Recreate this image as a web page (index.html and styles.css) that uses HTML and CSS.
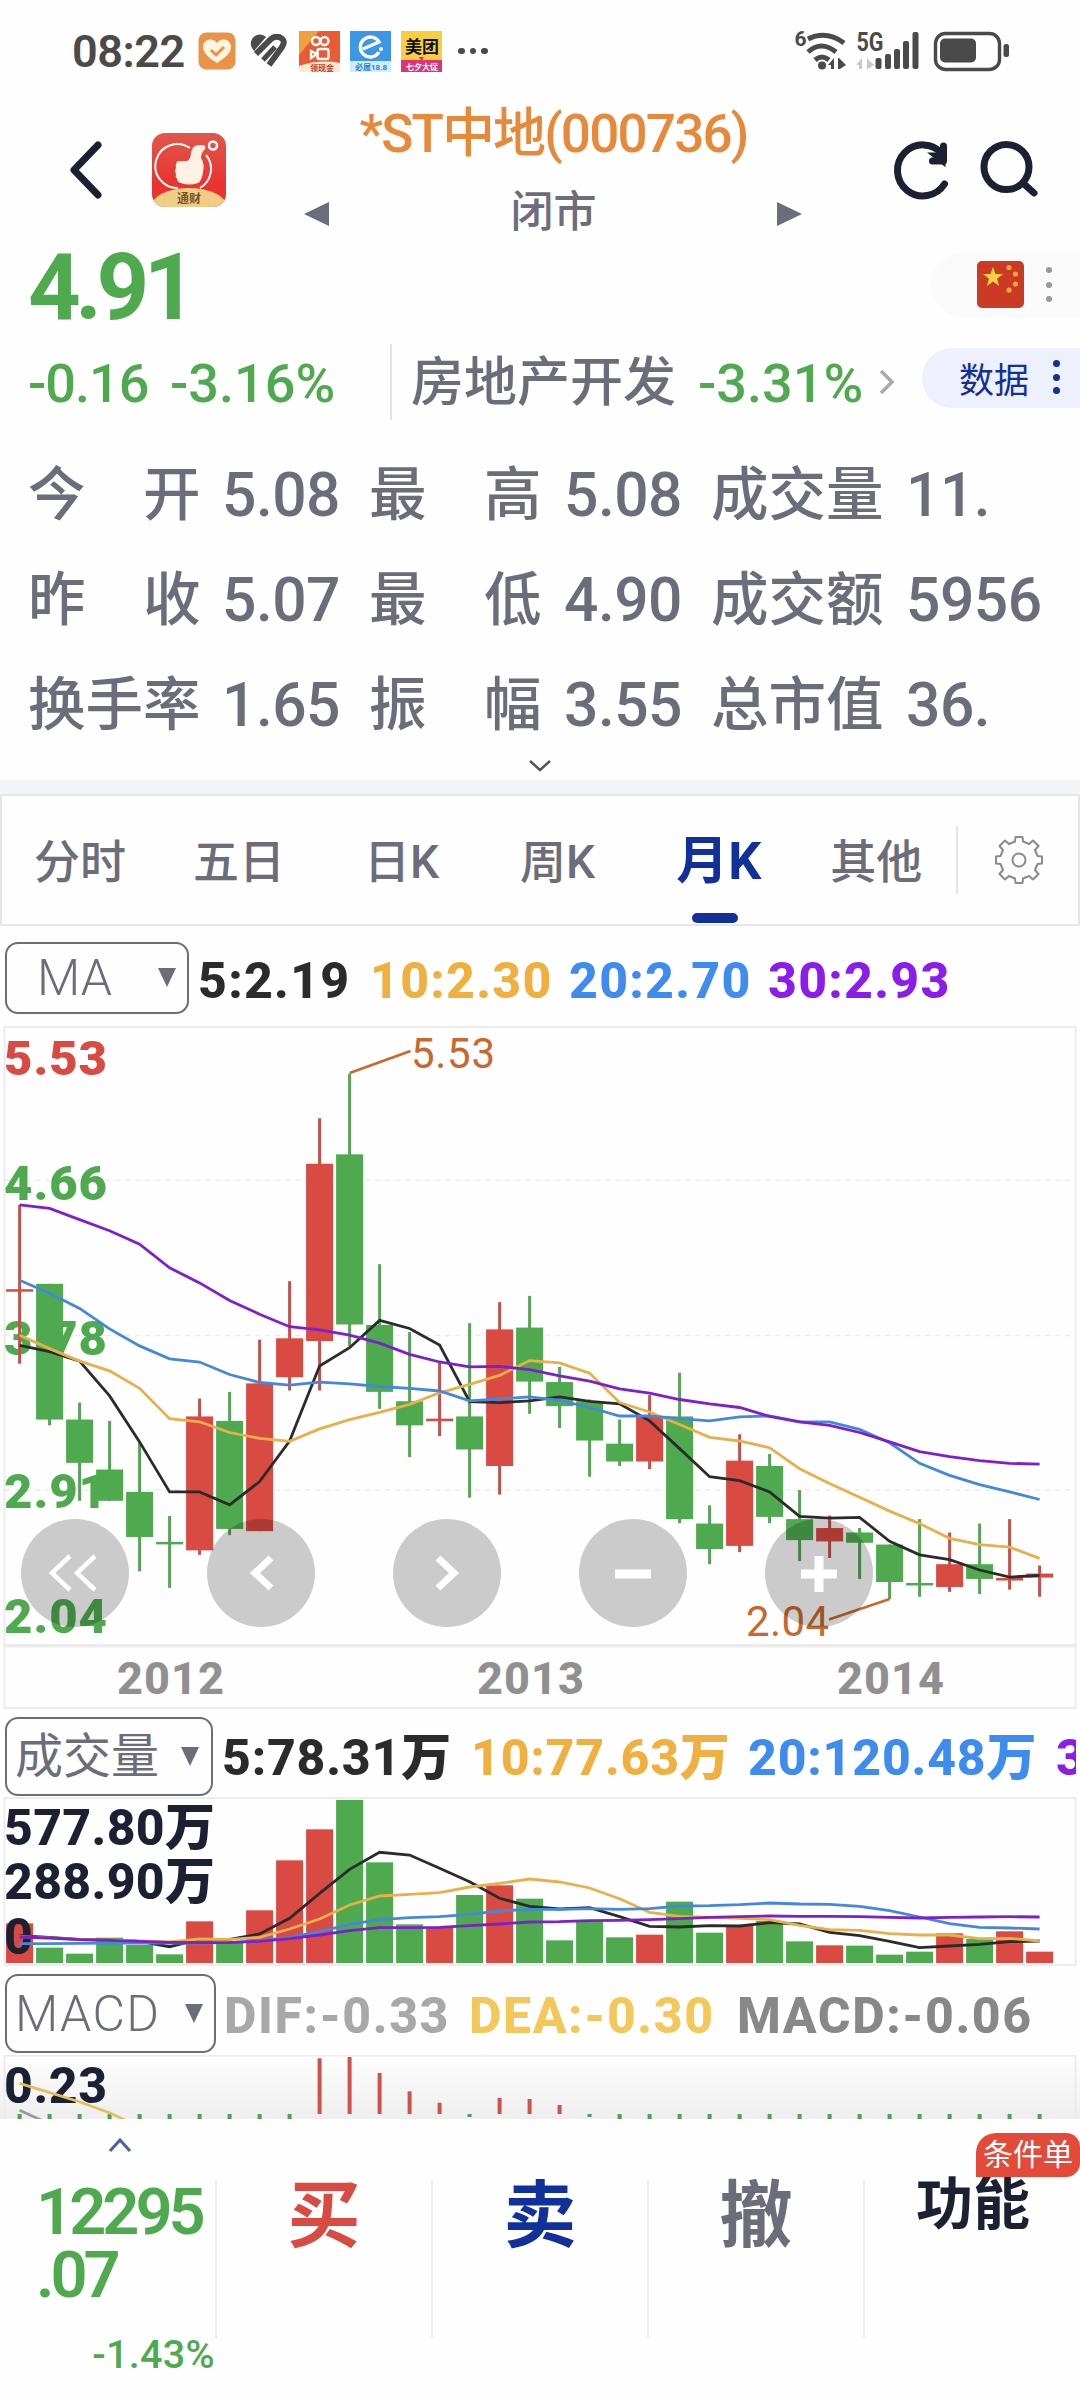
FILE: index.html
```html
<!DOCTYPE html>
<html lang="zh-CN">
<head>
<meta charset="utf-8">
<title>*ST中地(000736)</title>
<link rel="stylesheet" href="styles.css">
</head>

<body>
<div class="status">
	<span class="time">08:22</span>
	<svg class="ico-heart" width="38" height="38" viewBox="0 0 38 38">
		<rect x="0.5" y="0.5" width="37" height="37" rx="8" fill="#ea9348"/>
		<path d="M19 31C11 26 5 21 5 15c0-8 10-10 14-4 4-6 14-4 14 4 0 6-6 11-14 16z" fill="#fff3e2"/>
		<path d="M13 18l5 5 8-8" fill="none" stroke="#ea9348" stroke-width="3"/>
	</svg>
	<svg class="ico-keep" width="38" height="34" viewBox="0 0 38 34" fill="none" stroke="#4a4a4a">
		<path d="M2 14a9 9 0 0 1 14-11L4 17z" fill="#4a4a4a" stroke="none"/>
		<path d="M6 20L21 5q5-4 10-1t1 9L19 31" stroke-width="6"/>
		<path d="M13 26l12-13" stroke-width="5"/>
	</svg>
	<svg class="ico-app" width="41" height="41" viewBox="0 0 41 41">
		<rect width="41" height="41" fill="#ea5a35"/>
		<path d="M0 0h20L0 24z" fill="#f0a03c"/>
		<g fill="none" stroke="#fff" stroke-width="2.4">
			<circle cx="17" cy="10" r="4"/><circle cx="25.5" cy="10" r="4"/>
			<rect x="18.5" y="18" width="11" height="10" rx="2"/><path d="M12 20l6 3-6 4z"/>
		</g>
		<path d="M0 35q20-7 41-3v9H0z" fill="#fdebd0"/>
		<text x="11" y="40" font-size="8" font-weight="700" fill="#c53a24">领现金</text>
	</svg>
	<svg class="ico-app" width="41" height="41" viewBox="0 0 41 41">
		<rect width="41" height="41" fill="#3d97e6"/>
		<path d="M13 18l16-7A10 10 0 1 0 29 21" fill="none" stroke="#fff" stroke-width="3.4"/>
		<circle cx="31" cy="18" r="2" fill="#fff"/>
		<rect y="30" width="41" height="11" fill="#d2ebfb"/>
		<text x="5" y="39" font-size="8" font-weight="700" fill="#2f80cf">必属18.8</text>
	</svg>
	<svg class="ico-app" width="41" height="41" viewBox="0 0 41 41">
		<rect width="41" height="41" fill="#f6cf3f"/>
		<rect y="29" width="41" height="12" fill="#dd3377"/>
		<path d="M18 26h5l-2.5 4z" fill="#d33"/>
		<text x="4" y="22" font-size="17" font-weight="700" fill="#111">美团</text>
		<text x="5" y="39" font-size="8" font-weight="700" fill="#fff">七夕大促</text>
	</svg>
	<span class="more"><i></i><i></i><i></i></span>
	<svg class="signal" width="220" height="46" viewBox="790 28 220 46">
		<g fill="none" stroke="#4a4a4a">
			<path d="M808 39q18-9 36 4M808 52q13-12 28 0M815 60q7-6 14 0" stroke-width="5"/>
			<rect x="935.5" y="33.5" width="64" height="36" rx="10" stroke-width="3.4"/>
		</g>
		<g fill="#4a4a4a">
			<circle cx="822" cy="65.5" r="4"/>
			<path d="M828 65l6-7v11h-3v-4zM839 58l7 7-6 4h-2V58z"/>
			<rect x="875.5" y="58" width="6" height="11" rx="2"/>
			<rect x="885" y="54" width="6" height="15" rx="2"/>
			<rect x="894" y="49" width="6" height="20" rx="2"/>
			<rect x="903" y="41" width="6" height="28" rx="2"/>
			<rect x="912.5" y="32" width="6" height="37" rx="2"/>
			<rect x="940" y="38.5" width="36" height="24" rx="5"/>
			<rect x="1003.5" y="44" width="5.5" height="13" rx="2.5"/>
			<text x="794.5" y="46" font-size="21" font-weight="700">6</text>
			<text x="856.5" y="50.5" font-size="25" font-weight="700" textLength="27" lengthAdjust="spacingAndGlyphs">5G</text>
		</g>
		<path d="M856 65l6-7v11h-3v-4zM867 58l7 7-6 4h-1z" fill="#c9c9c9"/>
	</svg>
</div>

<div class="header">
	<svg class="back" width="40" height="64" viewBox="0 0 40 64"><path d="M32 8L8 33l24 25" fill="none" stroke="#1c2033" stroke-width="7" stroke-linecap="round" stroke-linejoin="round"/></svg>
	<svg class="logo" width="74" height="74" viewBox="0 0 74 74">
		<defs>
			<linearGradient id="red" x1="0" y1="0" x2="0" y2="1"><stop offset="0" stop-color="#e0574c"/><stop offset="0.7" stop-color="#ea322f"/></linearGradient>
			<clipPath id="round"><rect width="74" height="74" rx="13"/></clipPath>
		</defs>
		<g clip-path="url(#round)">
			<rect width="74" height="74" fill="url(#red)"/>
			<path d="M38 15a22 22 0 1 0-12 40M54 22a22 22 0 0 1-6 33" fill="none" stroke="#fff" stroke-width="2"/>
			<path d="M26 28h9q4-2 4-9 2-8 10-7 6 0 4 4-4 4-4 9 4 6 2 14-1 9-5 11-9 3-17 0-4-1-4-4-2-2-1-5-2-3 0-6-1-5 2-7z" fill="#fff1e4"/>
			<circle cx="61" cy="12.5" r="4" fill="none" stroke="#fff" stroke-width="2.5"/>
			<ellipse cx="37" cy="74" rx="38" ry="19" fill="#efcd87"/>
			<text x="25" y="70" font-size="12" font-weight="700" fill="#7b5122">通财</text>
		</g>
	</svg>
	<svg class="tri" width="26" height="24" viewBox="0 0 26 24"><path d="M0 12L25 0v24z" fill="#6b6d7a"/></svg>
	<div class="name">
		<h1>*ST中地(000736)</h1>
		<p>闭市</p>
	</div>
	<svg class="tri" width="26" height="24" viewBox="0 0 26 24"><path d="M0 0l25 12L0 24z" fill="#6b6d7a"/></svg>
	<svg class="tools" width="160" height="70" viewBox="885 135 160 70" fill="none" stroke="#1c2033" stroke-width="7" stroke-linecap="round">
		<path d="M944.5 185a25.5 25.5 0 1 1-2-30"/>
		<path d="M943.5 147v15h-11" stroke-linejoin="round"/><path d="M937 157h5v4z"/>
		<circle cx="1006.5" cy="168" r="22.5"/>
		<path d="M1024 185l10 9"/>
	</svg>
</div>

<div class="quote">
	<div class="price-row">
		<strong>4.91</strong>
		<div class="flag-pill">
			<svg width="47" height="47" viewBox="0 0 47 47">
				<rect width="47" height="47" rx="5" fill="#cb3a24"/>
				<path d="M16 6l2.5 7 7.5.1-6 4.6 2.2 7.3-6.2-4.4-6.2 4.4 2.2-7.3-6-4.6 7.5-.1z" fill="#fbd13c"/>
				<g fill="#f5a93a"><circle cx="32" cy="6.5" r="2.6"/><circle cx="38.5" cy="13" r="2.6"/><circle cx="38.5" cy="23" r="2.6"/><circle cx="32" cy="29" r="2.6"/></g>
			</svg>
			<span class="vdots grey"><i></i><i></i><i></i></span>
		</div>
	</div>
	<div class="change-row">
		<span class="diff">-0.16</span>
		<span class="rate">-3.16%</span>
		<span class="sector">房地产开发</span>
		<span class="sector-rate">-3.31%</span>
		<svg width="18" height="26" viewBox="0 0 18 26"><path d="M3 2l11 11L3 24" fill="none" stroke="#aaa" stroke-width="3.5"/></svg>
		<div class="data-pill">数据<span class="vdots"><i></i><i></i><i></i></span></div>
	</div>
</div>

<div class="stats">
	<span>今　开</span><b>5.08</b><span>最　高</span><b>5.08</b><span>成交量</span><b>11.</b>
	<span>昨　收</span><b>5.07</b><span>最　低</span><b>4.90</b><span>成交额</span><b>5956</b>
	<span>换手率</span><b>1.65</b><span>振　幅</span><b>3.55</b><span>总市值</span><b>36.</b>
</div>
<div class="expand"><svg width="24" height="14" viewBox="0 0 24 14"><path d="M2 2l10 9L22 2" fill="none" stroke="#555" stroke-width="2.5"/></svg></div>

<div class="tabs">
	<span>分时</span>
	<span>五日</span>
	<span>日K</span>
	<span>周K</span>
	<span class="on">月K</span>
	<span>其他</span>
	<div class="gear">
		<svg width="50" height="50" viewBox="-25 -25 50 50" fill="none" stroke="#8a8a8a" stroke-width="2">
			<path d="M-4-18.5L-3.5-23h7L4-18.5 10-16l4-3.5 5.5 5.5L16-10l2.500 6 4.500.5v7L18.500 4 16 10l3.500 4-5.500 5.500L10 16l-6 2.500-.5 4.500h-7L-4 18.500-10 16l-4 3.500-5.500-5.500L-16 10l-2.500-6-4.500-.5v-7l4.500-.5L-16-10l-3.500-4 5.500-5.500 4 3.500z" stroke-linejoin="round"/>
			<circle r="6.5"/>
		</svg>
	</div>
</div>

<div class="legend ma">
	<div class="select">MA<i></i></div>
	<span class="c5">5:2.19</span>
	<span class="c10">10:2.30</span>
	<span class="c20">20:2.70</span>
	<span class="c30">30:2.93</span>
</div>

<div class="kline">
	<svg id="kline" width="1080" height="683" viewBox="0 1026 1080 683"></svg>
	<div class="controls">
		<button><svg viewBox="0 0 108 108"><path d="M49 37L31 54l18 17M74 37L56 54l18 17" stroke-width="4.5"/></svg></button>
		<button><svg viewBox="0 0 108 108"><path d="M64 39L48 54l16 15" stroke-width="7"/></svg></button>
		<button><svg viewBox="0 0 108 108"><path d="M45 39l16 15-16 15" stroke-width="7"/></svg></button>
		<button><svg viewBox="0 0 108 108"><path d="M36 55h36" stroke-width="9"/></svg></button>
		<button><svg viewBox="0 0 108 108"><path d="M36 55h36M54 37v36" stroke-width="9"/></svg></button>
	</div>
</div>

<div class="legend vol">
	<div class="select">成交量<i></i></div>
	<span class="c5">5:78.31万</span>
	<span class="c10">10:77.63万</span>
	<span class="c20">20:120.48万</span>
	<span class="c30">3</span>
</div>
<svg id="volume" width="1080" height="169" viewBox="0 1797 1080 169"></svg>

<div class="legend macd">
	<div class="select">MACD<i></i></div>
	<span class="dif">DIF:-0.33</span>
	<span class="dea">DEA:-0.30</span>
	<span class="mac">MACD:-0.06</span>
</div>
<svg id="macd" width="1080" height="64" viewBox="0 2055 1080 64"></svg>

<div class="footer">
	<div class="index">
		<svg width="24" height="16" viewBox="0 0 24 16"><path d="M2 14L12 3l10 11" fill="none" stroke="#4a6494" stroke-width="3"/></svg>
		<strong>12295<br>.07</strong>
		<em>-1.43%</em>
	</div>
	<div class="buy">买</div>
	<div class="sell">卖</div>
	<div class="cancel">撤</div>
	<div class="func">功能<span class="badge">条件单</span></div>
</div>
<script src="chart.js"></script>
</body>
</html>
```
FILE: styles.css
```css
*{
	margin: 0;
	padding: 0;
	box-sizing: border-box;
}

body{
	width: 1080px;
	height: 2400px;
	overflow: hidden;
	background-color: #fefefe;
	font-family: Roboto, "Noto Sans CJK SC", sans-serif;
	color: #6b6d7a;
}
svg{
	display: block;
	flex: none;
}
svg text{
	font-family: Roboto, "Noto Sans CJK SC", sans-serif;
}

/* 状态栏 */
.status{
	display: flex;
	align-items: center;
	height: 102px;
	padding-left: 72px;
}
.time{
	width: 126px;
	font-size: 45px;
	font-weight: 600;
	letter-spacing: -0.5px;
	color: #4a4a4a;
	white-space: nowrap;
}
.ico-keep{
	margin: 0 11px 0 14px;
}
.ico-app{
	margin-right: 10px;
}
.more{
	display: flex;
	gap: 5px;
	margin-left: 6px;
}
.more i{
	width: 6.5px;
	height: 6.5px;
	border-radius: 50%;
	background-color: #4a4a4a;
}
.signal{
	margin-left: auto;
	margin-right: 70px;
}

/* 标题 */
.header{
	display: flex;
	height: 138px;
}
.back{
	margin: 35px 0 0 66px;
}
.logo{
	margin: 31px 78px 0 46px;
}
.tri{
	margin-top: 100px;
}
.name{
	width: 447px;
	text-align: center;
	white-space: nowrap;
}
.name h1{
	line-height: 64px;
	font-size: 53px;
	font-weight: 500;
	letter-spacing: -1.8px;
	color: #e6893a;
}
.name p{
	margin-top: 16px;
	line-height: 60px;
	font-size: 43px;
	font-weight: 500;
}
.tools{
	margin: 32px 0 0 82px;
}

/* 报价 */
.quote{
	height: 202px;
	color: #4faa4f;
	white-space: nowrap;
}
.price-row{
	display: flex;
	align-items: center;
	justify-content: space-between;
	height: 94px;
	padding-left: 28px;
}
.price-row strong{
	font-size: 92px;
	font-weight: 700;
	letter-spacing: -5.5px;
}
.flag-pill{
	display: flex;
	align-items: center;
	width: 149px;
	height: 65px;
	margin-top: -5px;
	padding-left: 46px;
	border-radius: 33px 0 0 33px;
	background-color: #fafafa;
}
.vdots{
	display: flex;
	flex-direction: column;
	gap: 6.5px;
	margin-left: 24px;
}
.vdots i{
	width: 7px;
	height: 7px;
	border-radius: 50%;
	background-color: #12309a;
}
.grey{
	margin-left: 22px;
	gap: 8.5px;
}
.grey i{
	width: 6px;
	height: 6px;
	background-color: #999;
}
.change-row{
	display: flex;
	align-items: center;
	height: 96px;
	padding-left: 28px;
	font-size: 54px;
}
.diff,
.rate,
.sector-rate{
	padding-top: 2px;
	font-weight: 500;
}
.diff{
	width: 142px;
	letter-spacing: -1px;
}
.rate{
	width: 220px;
}
.sector{
	width: 308px;
	height: 76px;
	line-height: 78px;
	padding-left: 19px;
	border-left: 2px solid #e4e4e4;
	font-size: 53px;
	font-weight: 500;
	color: #6b6d7a;
}
.sector-rate{
	width: 180px;
}
.data-pill{
	display: flex;
	align-items: center;
	width: 158px;
	height: 60px;
	margin: -8px 0 0 26px;
	padding: 0 0 2px 37px;
	border-radius: 30px 0 0 30px;
	background-color: #eef0fd;
	font-size: 35px;
	color: #12309a;
}

/* 行情数据 */
.stats{
	display: grid;
	grid-template-columns: 194px 147px 195px 147px 195px 1fr;
	grid-auto-rows: 105px;
	padding-left: 28px;
	line-height: 107px;
	font-size: 57.5px;
	font-weight: 500;
	white-space: nowrap;
}
.stats b{
	font-size: 60.5px;
	font-weight: 500;
	letter-spacing: -0.5px;
}
.expand{
	display: flex;
	justify-content: center;
	height: 37px;
	padding-top: 2px;
	border-bottom: 14px solid #f3f4f8;
}

/* 周期切换 */
.tabs{
	display: flex;
	align-items: center;
	height: 132px;
	padding-left: 32px;
	border: 2px solid #e6e6e6;
	font-size: 46px;
	font-weight: 500;
	white-space: nowrap;
}
.tabs span{
	height: 128px;
	line-height: 132px;
	margin-right: 67px;
}
.tabs span:nth-child(2){
	margin-right: 79px;
}
.tabs span:nth-child(3),
.tabs span:nth-child(4){
	margin-right: 81px;
}
.tabs .on{
	position: relative;
	margin-right: 69px;
	font-size: 52px;
	font-weight: 700;
	color: #12309a;
}
.tabs .on:after{
	content: "";
	position: absolute;
	left: 16px;
	bottom: 1px;
	width: 46px;
	height: 10px;
	border-radius: 5px;
	background-color: #12309a;
}
.tabs span:nth-child(6){
	margin-right: 34px;
}
.gear{
	display: flex;
	align-items: center;
	height: 68px;
	padding-left: 36px;
	border-left: 2px solid #e4e4e4;
}

/* 指标 */
.legend{
	display: flex;
	align-items: center;
	width: 1076px;
	padding-left: 5px;
	overflow: hidden;
	font-size: 50px;
	font-weight: 800;
	letter-spacing: 1.3px;
	white-space: nowrap;
}
.legend span{
	flex: none;
	line-height: 60px;
}
.ma{
	height: 100px;
	padding-top: 10px;
}
.vol{
	height: 88px;
	padding-top: 10px;
	letter-spacing: 0.8px;
}
.macd{
	height: 89px;
	padding-top: 10px;
	letter-spacing: 1.6px;
}
.select{
	display: flex;
	flex: none;
	align-items: center;
	justify-content: space-between;
	width: 184px;
	height: 72px;
	margin: -7px 9px 0 0;
	padding: 0 11px 0 30px;
	border: 2px solid #6b6d7a;
	border-radius: 13px;
	font-size: 50px;
	font-weight: 300;
	letter-spacing: 0;
}
.select i{
	border: 9px solid transparent;
	border-top: 19px solid #6b6d7a;
	border-bottom: 0;
}
.vol .select{
	width: 208px;
	height: 79px;
	margin-top: -3px;
	padding: 0 12px 0 8px;
	line-height: 70px;
	font-size: 48px;
	font-weight: 400;
}
.macd .select{
	width: 211px;
	height: 79px;
	margin: -4px 8px 0 0;
	padding-left: 8px;
	letter-spacing: 1.4px;
}
.c5{
	width: 172px;
	color: #2b2b2b;
}
.c10{
	width: 199px;
	color: #f0b040;
}
.c20{
	width: 199px;
	color: #3f8cf0;
}
.c30{
	color: #8a1cec;
}
.vol .c5{
	width: 249px;
}
.vol .c10{
	width: 277px;
}
.vol .c20{
	width: 308px;
}
.dif{
	width: 245px;
	color: #a8a8a8;
}
.dea{
	width: 268px;
	color: #f3c75a;
}
.mac{
	color: #888;
}

/* K线 */
.kline{
	position: relative;
}
.controls{
	position: absolute;
	left: 21px;
	top: 493px;
	display: flex;
	gap: 78px;
}
.controls button{
	width: 108px;
	height: 108px;
	border: 0;
	border-radius: 50%;
	background-color: rgba(0, 0, 0, 0.2);
}
.controls svg{
	fill: none;
	stroke: #fff;
}
.axis{
	font-size: 49px;
	font-weight: 900;
}
.dark{
	font-size: 50px;
	font-weight: 800;
	fill: #1c2033;
}
.year{
	font-size: 45px;
	font-weight: 800;
	fill: #909090;
}
.mark{
	font-size: 42px;
	fill: #c8682e;
}

/* 底部 */
.footer{
	display: flex;
	position: relative;
	height: 281px;
	background-color: #fefefe;
	text-align: center;
	font-size: 73px;
	font-weight: 700;
}
.footer > div{
	flex: none;
	width: 216px;
	height: 158px;
	margin-top: 61px;
	line-height: 72px;
	border-right: 2px solid #ededed;
}
.footer .index{
	display: flex;
	flex-direction: column;
	width: 215px;
	height: 220px;
	margin-top: 0;
	border: 0;
	color: #4faa4f;
	text-align: left;
}
.index svg{
	margin: 18px 0 0 108px;
}
.index strong{
	margin: 28px 0 0 36px;
	line-height: 63px;
	font-size: 65px;
	font-weight: 600;
	letter-spacing: -4px;
}
.index em{
	align-self: flex-end;
	margin-top: 23px;
	line-height: 50px;
	font-size: 39.5px;
	font-style: normal;
	font-weight: 500;
	letter-spacing: 0.3px;
}
.footer .buy{
	width: 218px;
	color: #d94a43;
	border-left: 2px solid #ededed;
}
.sell{
	color: #12309a;
}
.footer .func{
	line-height: 50px;
	border: 0;
	font-size: 57px;
	color: #1c2033;
}
.badge{
	position: absolute;
	right: 0;
	top: 14px;
	width: 104px;
	height: 44px;
	line-height: 44px;
	border-radius: 20px 14px 14px 0;
	background-color: #e34a3a;
	font-size: 30px;
	font-weight: 400;
	color: #fff;
}
```
FILE: chart.js
```js
var RED = '#d94a43', GREEN = '#4faa4f';
var LINES = ['#2b2b2b', '#e8b04a', '#4488dc', '#7d20cc'];
var STEP = 30, FIRST = 19.6, BODY = 27;

// 涨跌, 最高, 实体上沿, 实体下沿, 最低
var candles = [
	[1,414,603,606,770],[0,591,591,895,908],[0,857,895,992,1077],[0,898,1007,1077,1077],[0,945,1057,1158,1235],
	[0,1111,1169,1172,1272],[1,848,888,1188,1198],[0,833,898,1140,1154],[1,716,814,1145,1145],[1,585,713,800,830],
	[1,220,322,719,830],[0,120,301,682,730],[0,547,683,833,871],[0,699,854,908,979],[1,765,893,896,932],
	[0,679,888,962,1070],[1,632,693,999,1063],[0,618,689,810,882],[0,777,811,865,914],[0,850,854,942,1023],
	[0,895,949,989,999],[1,840,888,989,1006],[0,790,888,1118,1127],[0,1087,1128,1185,1219],[1,928,987,1178,1192],
	[0,972,999,1113,1127],[0,1053,1118,1165,1212],[1,1110,1138,1168,1205],[0,1138,1148,1171,1252],[0,1175,1175,1259,1297],
	[0,1118,1261,1265,1292],[1,1148,1219,1270,1281],[0,1128,1219,1252,1286],[1,1118,1250,1255,1276],[1,1222,1240,1249,1292]
];
var ma = [
	[729,743,764,842,945,1057,1057,1086,1034,943,775,734,673,691,728,855,857,853,844,854,860,898,960,1023,1032,1057,1112,1116,1114,1168,1198,1209,1232,1248,1244],
	[706,736,764,786,825,893,900,924,937,944,916,895,879,861,835,816,796,763,768,791,857,878,906,935,943,958,1005,1038,1069,1100,1128,1161,1175,1181,1206],
	[583,612,646,692,730,759,766,794,812,818,811,815,821,825,831,853,849,844,852,868,887,887,893,898,889,887,900,900,917,947,993,1020,1041,1057,1074],
	[414,422,447,472,502,555,589,628,659,687,694,706,724,749,766,777,776,783,797,809,826,836,850,860,868,888,900,908,924,945,967,978,987,993,995]
];
var volumes = [670,743,761,713,735,763,664,728,631,481,388,300,487,673,684,585,556,596,721,661,712,704,605,698,676,663,724,736,737,764,755,700,717,694,755];
var volMa = [
	[707,712,718,720,724,740,718,718,702,655,580,508,457,465,505,545,595,619,627,623,650,679,681,677,678,668,672,697,707,724,743,738,733,725,723],
	[710,714,719,720,723,726,717,718,712,687,657,615,588,583,578,561,550,537,546,564,596,637,649,652,655,659,676,689,691,701,705,705,716,715,723],
	[731,731,730,729,729,729,729,728,722,712,695,673,659,653,650,643,633,628,628,626,628,626,618,617,614,609,612,613,619,632,651,671,682,684,687],
	[711,714,719,721,724,727,728,728,724,716,705,692,683,683,682,677,672,666,665,662,661,659,656,652,650,648,649,649,650,652,654,652,651,650,651]
];
var macdUp = {10:1075, 11:1071, 12:1119, 13:1174, 14:1208, 16:1194, 17:1197, 18:1215};

var x = function(i) { return FIRST + STEP * i; };
var ky = function(v) { return 1020 + v / 2.24; };
var vy = function(v) { return 1700 + v / 3; };
var rect = function(x, y, w, h, fill) {
	return '<rect x="' + x + '" y="' + y + '" width="' + w + '" height="' + h + '" fill="' + fill + '"/>';
};
var frame = function(y, h) {
	return '<rect x="4.5" y="' + y + '" width="1071" height="' + h + '" fill="none" stroke="#ececec" stroke-width="2"/>';
};
var label = function(cls, x, y, len, text, fill) {
	return '<text class="' + cls + '" x="' + x + '" y="' + y + '" textLength="' + len + '"' + (fill ? ' fill="' + fill + '"' : '') + '>' + text + '</text>';
};
var polylines = function(sets, y, width) {
	return sets.map(function(set, n) {
		var pts = set.map(function(v, i) { return x(i) + ',' + y(v).toFixed(1); }).join(' ');
		return '<polyline points="' + pts + '" fill="none" stroke="' + LINES[n] + '" stroke-width="' + width + '"/>';
	}).join('');
};

// K线图
var s = frame(1027, 618) + frame(1646.5, 61.5);
[1180.3, 1335.6, 1490].forEach(function(y) {
	s += '<path d="M5 ' + y + 'H1071" stroke="#ececec" stroke-width="1.5" stroke-dasharray="5 5"/>';
});
s += label('axis', 4, 1074.5, 103, '5.53', RED) + label('axis', 4, 1199.5, 103, '4.66', GREEN) + label('axis', 4, 1354.5, 103, '3.78', GREEN)
	+ label('axis', 4, 1508, 103, '2.91', GREEN) + label('axis', 4, 1633, 103, '2.04', GREEN);
candles.forEach(function(c, i) {
	var color = c[0] ? RED : GREEN;
	s += rect(x(i) - 1.5, ky(c[1]), 3, ky(c[4]) - ky(c[1]), c[0] ? '#be544d' : '#5aa15a');
	s += rect(x(i) - BODY / 2, ky(c[2]), BODY, Math.max(2.5, ky(c[3]) - ky(c[2])), color);
});
s += polylines(ma, ky, 2.8);
s += '<path d="M349.7 1073L410.5 1051M829 1619.5L889.7 1599" stroke="#c8682e" stroke-width="2.6"/>';
s += label('mark', 411, 1067.5, 84, '5.53') + label('mark', 746, 1635.5, 83, '2.04');
s += label('year', 117, 1694, 107, '2012') + label('year', 477, 1694, 107, '2013') + label('year', 837, 1694, 107, '2014');
document.querySelector('#kline').innerHTML = s;

// 成交量
s = frame(1798, 167);
volumes.forEach(function(v, i) {
	s += rect(x(i) - BODY / 2, vy(v), BODY, 1963 - vy(v), candles[i][0] ? RED : GREEN);
});
s += label('dark', 4, 1845, 211, '577.80万') + label('dark', 4, 1899, 211, '288.90万') + label('dark', 4, 1954, 28, '0');
s += polylines(volMa, vy, 2.8);
document.querySelector('#volume').innerHTML = s;

// MACD
s = '<defs><linearGradient id="fade" x1="0" y1="0" x2="0" y2="1"><stop offset="0" stop-color="#fefefe"/><stop offset="1" stop-color="#eeeeee"/></linearGradient></defs>';
s += rect(0, 2056, 1080, 64, 'url(#fade)') + frame(2055.5, 120);
for (var i = 0; i < 35; i++) {
	if (macdUp[i]) {
		s += rect(x(i) - 2, vy(macdUp[i]), 4, 2114 - vy(macdUp[i]), '#cc544d');
	} else {
		s += rect(x(i) - 2, 2114, 4, i === 15 || i === 19 ? 3 : 6, '#4f9f55');
	}
}
s += label('dark', 4, 2103, 103, '0.23');
s += '<polyline points="19.6,2083.3 50,2092.7 80,2102 110,2113 125,2120" fill="none" stroke="#e6bd5c" stroke-width="2.8"/>';
s += '<path d="M19.6 2110.3L41 2120" stroke="#999" stroke-width="2.8"/>';
document.querySelector('#macd').innerHTML = s;
```
